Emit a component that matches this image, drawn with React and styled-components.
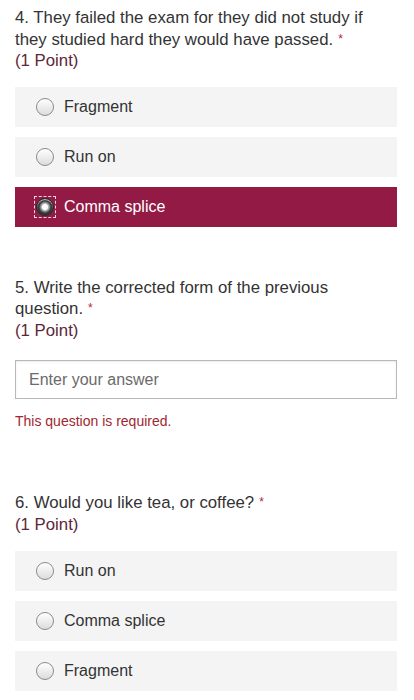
import * as React from "react";
import styled, { createGlobalStyle } from "styled-components";

const GlobalStyle = createGlobalStyle`
  body {
    margin: 0;
    background: #ffffff;
    font-family: "Liberation Sans", Arial, sans-serif;
    color: #333333;
  }
`

const Page = styled.div`
  padding: 7px 17px 0 15px;
`

const Question = styled.section`
  margin-bottom: ${p => p.$after}px;
`

const Title = styled.div`
  font-size: 16.8px;
  line-height: 21.5px;
  color: #333;
  padding-right: 10px;

  span.star {
    color: #b4263c;
    font-size: 12px;
    line-height: 1;
    vertical-align: 2px;
    margin-left: 5px;
  }
`

const Points = styled.div`
  font-size: 16.8px;
  line-height: 21.5px;
  color: #5c2737;
`

const Options = styled.div`
  display: flex;
  flex-direction: column;
  gap: 10px;
  margin-top: ${p => p.$top}px;
`

const Option = styled.label`
  display: flex;
  align-items: center;
  height: 40px;
  padding-left: 21px;
  gap: 10px;
  font-size: 16px;
  background: ${p => (p.$selected ? "#921a45" : "#f4f4f4")};
  color: ${p => (p.$selected ? "#ffffff" : "#333333")};
`

const Radio = styled.span`
  position: relative;
  box-sizing: border-box;
  width: 18px;
  height: 18px;
  border-radius: 50%;
  border: 1px solid ${p => (p.$checked ? "#2a2a2a" : "#8a8a8a")};
  background: ${p =>
    p.$checked
      ? "radial-gradient(circle, #ffffff 0 2.5px, #bdbdbd 3.5px, #3a3a3a 6px, #1f1f1f 100%)"
      : "linear-gradient(#ffffff, #dcdcdc)"};
  box-shadow: inset 0 1px 1px rgba(255, 255, 255, 0.8);

  &::after {
    content: "";
    display: ${p => (p.$checked ? "block" : "none")};
    position: absolute;
    inset: -3px;
    border: 1.5px dashed #f0d7e0;
  }
`

const Input = styled.div`
  box-sizing: border-box;
  height: 39px;
  margin-top: 19px;
  border: 1px solid #b8b8b8;
  box-shadow: inset 0 1px 2px rgba(0, 0, 0, 0.08);
  display: flex;
  align-items: center;
  padding-left: 13px;
  font-size: 16px;
  color: #6b6b6b;
`

const ErrorText = styled.div`
  margin-top: 14px;
  font-size: 14px;
  color: #a1262f;
`

function Choice({ label, selected }) {
  return (
    <Option $selected={selected}>
      <Radio $checked={selected} />
      {label}
    </Option>
  );
}

export default function App() {
  return (
    <>
      <GlobalStyle />
      <Page>
        <Question $after={50}>
          <Title>
            4. They failed the exam for they did not study if they studied hard they would have passed.<span className="star">*</span>
          </Title>
          <Points>(1 Point)</Points>
          <Options $top={15}>
            <Choice label="Fragment" />
            <Choice label="Run on" />
            <Choice label="Comma splice" selected />
          </Options>
        </Question>

        <Question $after={63}>
          <Title>
            5. Write the corrected form of the previous question.<span className="star">*</span>
          </Title>
          <Points>(1 Point)</Points>
          <Input>Enter your answer</Input>
          <ErrorText>This question is required.</ErrorText>
        </Question>

        <Question $after={0}>
          <Title>
            6. Would you like tea, or coffee?<span className="star">*</span>
          </Title>
          <Points>(1 Point)</Points>
          <Options $top={16}>
            <Choice label="Run on" />
            <Choice label="Comma splice" />
            <Choice label="Fragment" />
          </Options>
        </Question>
      </Page>
    </>
  );
}
